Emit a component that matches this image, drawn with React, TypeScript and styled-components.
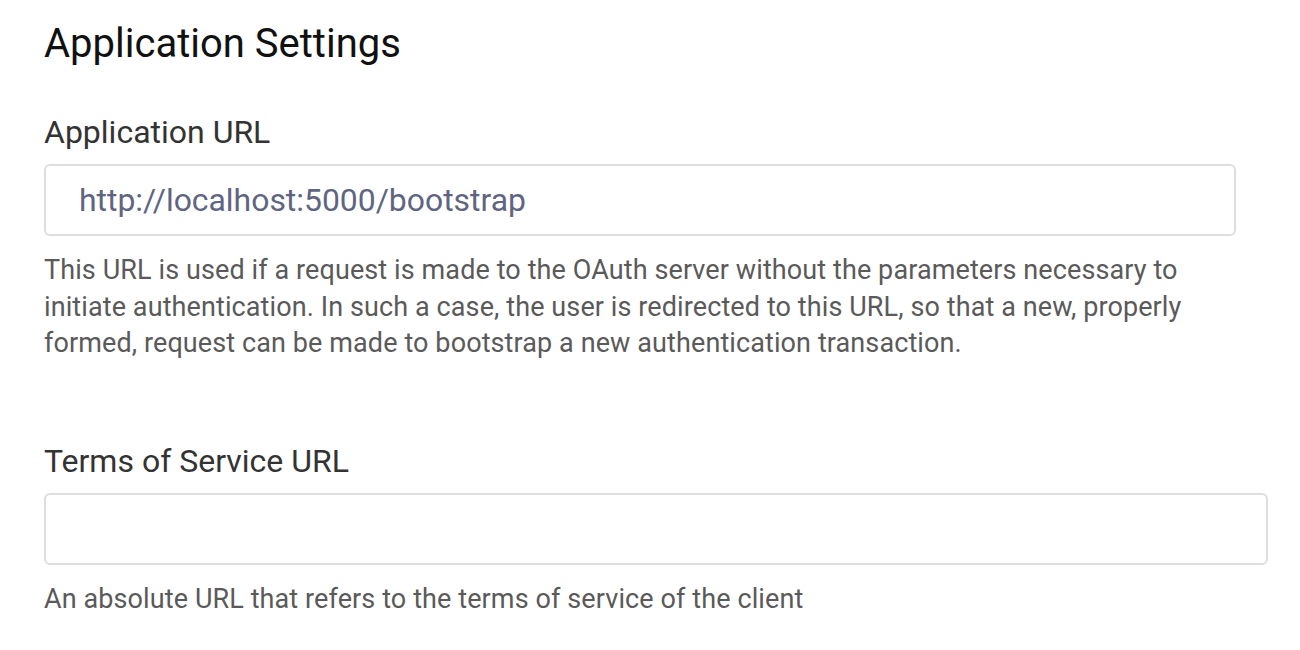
import React from "react";
import styled, { createGlobalStyle } from "styled-components";

const Global = createGlobalStyle`
  html, body { margin: 0; padding: 0; background: #fff; }
  body { font-family: Roboto, "Liberation Sans", sans-serif; }
`;

const Page = styled.div`
  padding: 18px 32px 0 44px;
  display: flex;
  flex-direction: column;
`;

const Title = styled.h1`
  margin: 0 0 42px;
  font-size: 40px;
  font-weight: 400;
  line-height: 52px;
  color: #111;
`;

const Field = styled.div<{ $gap?: number; $inset?: number }>`
  display: flex;
  flex-direction: column;
  margin-bottom: ${(p) => p.$gap ?? 0}px;
  margin-right: ${(p) => p.$inset ?? 0}px;
`;

const Label = styled.label`
  font-size: 32px;
  line-height: 40px;
  color: #333;
  margin-bottom: 12px;
`;

const Input = styled.input`
  box-sizing: border-box;
  height: 72px;
  border: 2px solid #dedede;
  border-radius: 6px;
  padding: 0 33px;
  font-family: Roboto, "Liberation Sans", sans-serif;
  font-size: 31.9px;
  color: #5f6581;
  outline: none;
  background: #fff;
`;

const Help = styled.p`
  margin: 16px 0 0;
  font-size: 27px;
  letter-spacing: 0.1px;
  line-height: 36.5px;
  color: #5a5a5a;
`;

export default function App() {
  return (
    <>
      <Global />
      <Page>
        <Title>Application Settings</Title>
        <Field $gap={79} $inset={32}>
          <Label>Application URL</Label>
          <Input defaultValue="http://localhost:5000/bootstrap" />
          <Help>
            This URL is used if a request is made to the OAuth server without the parameters necessary to
            initiate authentication. In such a case, the user is redirected to this URL, so that a new, properly
            formed, request can be made to bootstrap a new authentication transaction.
          </Help>
        </Field>
        <Field>
          <Label>Terms of Service URL</Label>
          <Input />
          <Help>An absolute URL that refers to the terms of service of the client</Help>
        </Field>
      </Page>
    </>
  );
}
